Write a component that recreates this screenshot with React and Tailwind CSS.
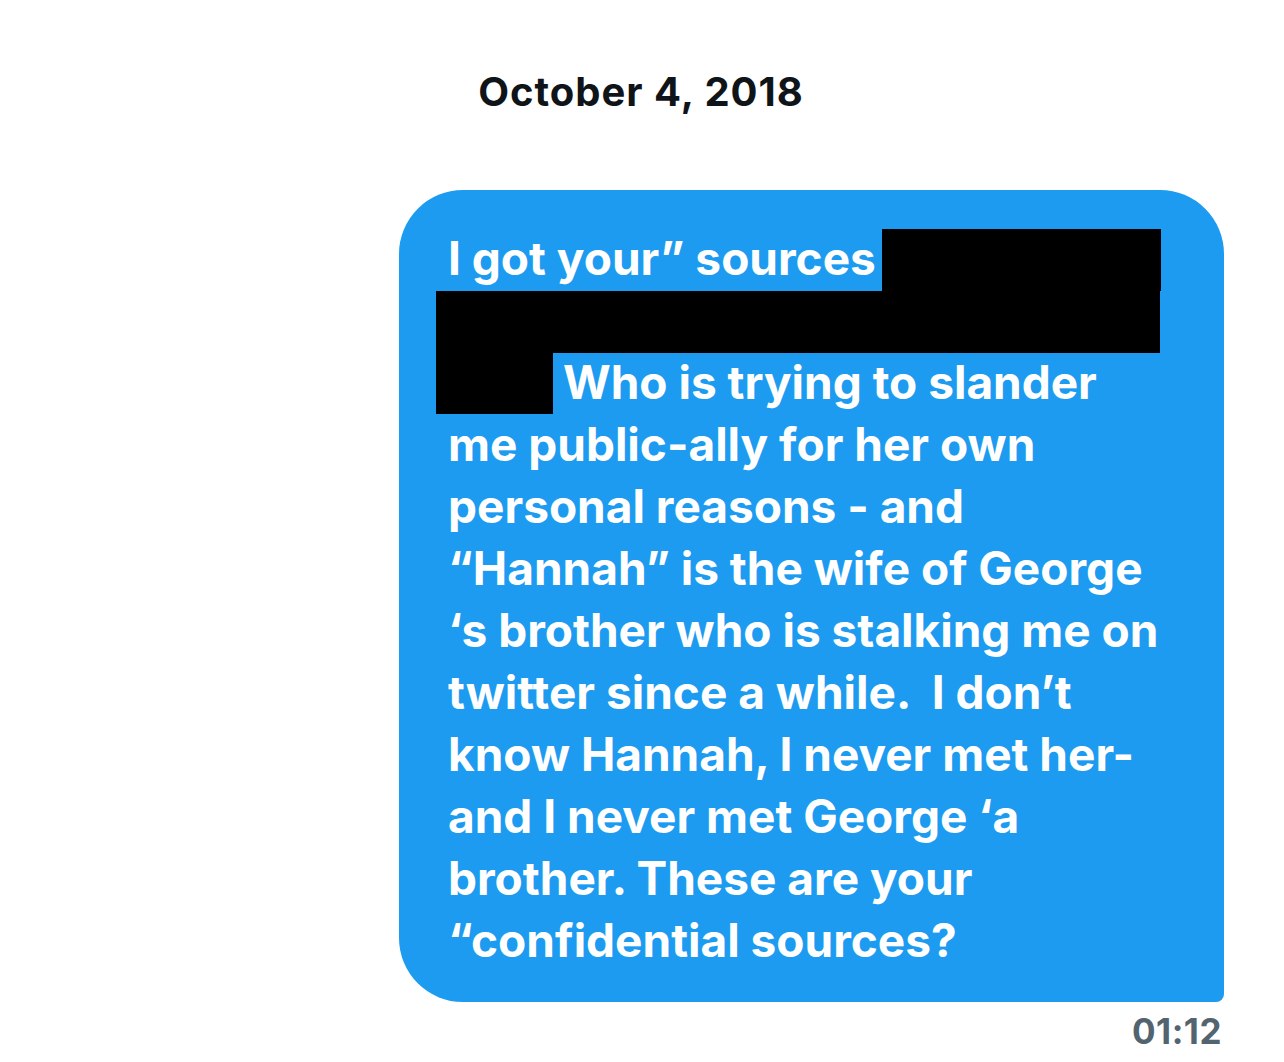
import React from 'react';

const lines = [
  'Who is trying to slander',
  'me public-ally for her own',
  'personal reasons - and',
  '“Hannah” is the wife of George',
  '‘s brother who is stalking me on',
  'twitter since a while.  I don’t',
  'know Hannah, I never met her-',
  'and I never met George ‘a',
  'brother. These are your',
  '“confidential sources?',
];

export default function App() {
  return (
    <div className="w-[1284px] h-[1062px] bg-white font-['Inter',sans-serif] overflow-hidden">
      <div className="h-[190px] flex justify-center pt-[67px] pr-[2px]">
        <h1 className="text-[40px] leading-[50px] font-bold text-[#0f1419] tracking-[1px]">October 4, 2018</h1>
      </div>

      <div className="flex flex-col items-end pr-[60px]">
        <div className="w-[825px] bg-[#1d9bf0] rounded-[64px] rounded-br-[8px] pt-[37px] pb-[31px] pl-[49px] text-white font-bold text-[46px] leading-[62px] whitespace-pre">
          <div className="h-[62px] flex items-start">
            <span>I got your” sources</span>
            <span className="ml-auto mr-[63px] w-[279px] mt-[2px] h-[62px] bg-black" />
          </div>
          <div className="h-[62px] flex items-start">
            <span className="ml-[-12px] mt-[2px] w-[724px] h-[62px] bg-black" />
          </div>
          {lines.map((line, i) => (
            <div key={i} className="h-[62px] flex items-start">
              {i === 0 && <span className="ml-[-12px] mr-[10px] mt-[2px] w-[117px] h-[61px] bg-black" />}
              <span>{line}</span>
            </div>
          ))}
        </div>
        <div className="pt-[9px] pr-[2px] text-[35px] leading-[40px] font-bold text-[#536471] tracking-[0.5px]">01:12</div>
      </div>
    </div>
  );
}
